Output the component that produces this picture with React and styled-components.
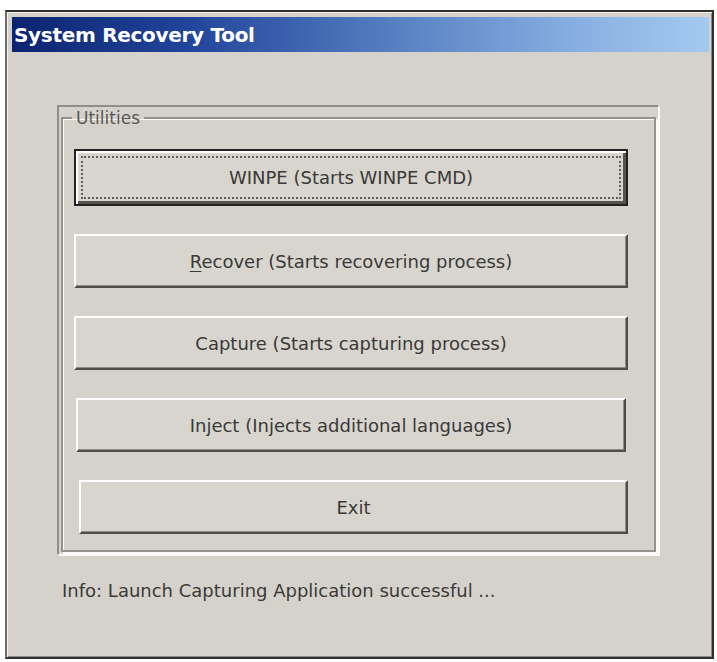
import React from 'react'
import styled, { createGlobalStyle } from 'styled-components'

const GlobalStyle = createGlobalStyle`
  body {
    margin: 0;
    background: #ffffff;
    font-family: "DejaVu Sans", "Open Sans", sans-serif;
  }
`

const buttons = [
  { id: 'winpe', label: 'WINPE (Starts WINPE CMD)', isDefault: true },
  { id: 'recover', label: 'ecover (Starts recovering process)', mnemonic: 'R' },
  { id: 'capture', label: 'Capture (Starts capturing process)' },
  { id: 'inject', label: 'Inject (Injects additional languages)', shift: 2 },
  { id: 'exit', label: 'Exit', shift: 5 },
]

function App() {
  return (
    <>
      <GlobalStyle />
      <Window>
        <TitleBar>System Recovery Tool</TitleBar>
        <Panel>
          <Group>
            <Legend>Utilities</Legend>
            <ButtonList>
              {buttons.map((b) => (
                <Button key={b.id} $default={b.isDefault} $shift={b.shift}>
                  {b.mnemonic && <u>{b.mnemonic}</u>}
                  {b.label}
                </Button>
              ))}
            </ButtonList>
          </Group>
        </Panel>
        <Info>Info: Launch Capturing Application successful ...</Info>
      </Window>
    </>
  )
}

const Window = styled.div`
  box-sizing: border-box;
  margin: 10px 0 0 5px;
  width: 709px;
  height: 649px;
  padding: 5px 3px 0 5px;
  background: #d5d2cb;
  border: 2px solid #2f2f2f;
  border-left-color: #6a6a68;
  box-shadow: inset 1px 1px 0 #f4f3ef, inset -1px -1px 0 #8c8a86;
  display: flex;
  flex-direction: column;
`

const TitleBar = styled.div`
  height: 35px;
  display: flex;
  align-items: center;
  padding-left: 2px;
  background: linear-gradient(to right, #0c2470 0%, #21449a 25%, #5680c2 55%, #86ade0 80%, #a4c9f0 100%);
  color: #ffffff;
  font-weight: bold;
  font-size: 20px;
  letter-spacing: -0.3px;
`

const Panel = styled.div`
  box-sizing: border-box;
  margin: 53px 0 0 45px;
  width: 601px;
  height: 449px;
  border-top: 2px solid #908e89;
  border-left: 2px solid #908e89;
  box-shadow: 2px 2px 0 #fbfaf7;
  padding: 0 2px 2px 2px;
`

const Group = styled.fieldset`
  box-sizing: border-box;
  margin: 0;
  height: 100%;
  padding: 0;
  border: 2px solid #94928d;
  box-shadow: 2px 2px 0 #fbfaf7, inset 1px 1px 0 #fbfaf7;
`

const Legend = styled.legend`
  margin-left: 9px;
  padding: 0 4px;
  font-size: 17px;
  line-height: 22px;
  color: #5a5957;
`

const ButtonList = styled.div`
  display: flex;
  flex-direction: column;
  gap: 28px;
  margin: 20px 0 0 11px;
  width: 554px;
`

const Button = styled.button`
  box-sizing: border-box;
  height: ${(p) => (p.$default ? '57px' : '54px')};
  margin-left: ${(p) => p.$shift || 0}px;
  width: ${(p) => 554 - (p.$shift || 0) - (p.$shift === 2 ? 2 : 0)}px;
  background: #d8d5cf;
  font-family: inherit;
  font-size: 18px;
  color: #393937;
  cursor: default;
  border: 2px solid;
  border-color: #fdfdfc #4e4d4a #4e4d4a #fdfdfc;
  box-shadow: inset -1px -1px 0 #8f8d88;
  ${(p) =>
    p.$default &&
    `
    border: 2px solid #222;
    box-shadow: inset 2px 2px 0 #fdfdfc, inset -3px -3px 0 #55544f;
    outline: 2px dotted #5f5e5a;
    outline-offset: -9px;
  `}

  u {
    text-decoration-thickness: 1px;
    text-underline-offset: 3px;
  }
`

const Info = styled.div`
  margin: 25px 0 0 50px;
  font-size: 18px;
  line-height: 24px;
  color: #3b3b39;
`

export default App
